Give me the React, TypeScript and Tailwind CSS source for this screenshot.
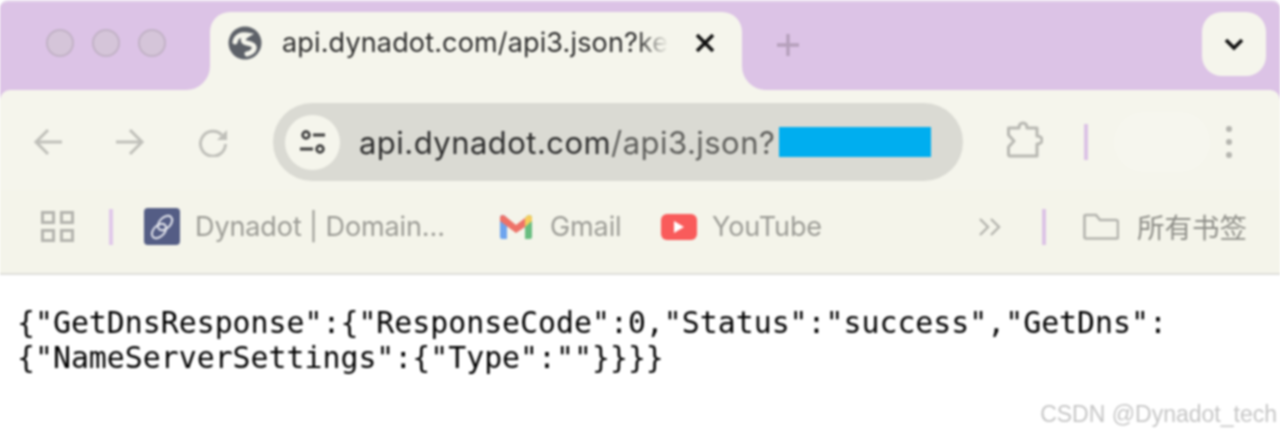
import React from "react";

function Globe() {
  return (
    <svg width="34" height="34" viewBox="0 0 34 34" className="shrink-0">
      <circle cx="17" cy="17" r="16.5" fill="#5d6168" />
      <path d="M7 16 C8 10 13 8 19 9 C14 12 14 16 19 17 C25 18 27 20 26 23 C25 26 23 27 19 28" stroke="#f5f5ec" strokeWidth="5" fill="none" strokeLinecap="round" />
    </svg>
  );
}

function Gmail() {
  return (
    <svg width="34" height="26" viewBox="0 0 34 26" className="shrink-0">
      <path d="M1 4 C1 1 4 0 6 2 L8 4 V25 H3 C2 25 1 24 1 23Z" fill="#6ea4ee" />
      <path d="M26 4 L28 2 C30 0 33 1 33 4 V23 C33 24 32 25 31 25 H26Z" fill="#68bd80" />
      <path d="M1 4 C1 1 4 0 6 2 L17 11 L26 4 V13 L17 19 L1 7Z" fill="#ee7268" />
      <path d="M26 4 L28 2 C30 0 33 1 33 4 V7 L26 13Z" fill="#f6cc5c" />
    </svg>
  );
}

function Bookmark({ icon, label, cls }: { icon: React.ReactNode; label: string; cls: string }) {
  return (
    <div className={"flex items-center " + cls}>
      {icon}
      <span className="text-[27px] leading-none text-[#9c9c96] whitespace-nowrap tracking-[-0.1px]">{label}</span>
    </div>
  );
}

export default function App() {
  return (
    <div className="h-[436px] w-[1280px] overflow-hidden bg-white blur-[0.8px] font-['Inter','Noto_Sans_CJK_SC',sans-serif] relative">
      <div className="rounded-t-[8px] overflow-hidden border-t-[2px] border-[#e8dbee] bg-[#dcc3e6]">
        {/* tab strip */}
        <div className="flex h-[88px] bg-[#f5f5ec]">
          <div className="w-[210px] bg-[#dcc3e6] rounded-br-[24px] flex items-center pb-[6px] pl-[46px] gap-[18px]">
            <div className="w-[28px] h-[28px] rounded-full bg-[#d5c5d9] border-2 border-[#c2b2c6]" />
            <div className="w-[28px] h-[28px] rounded-full bg-[#d5c5d9] border-2 border-[#c2b2c6]" />
            <div className="w-[28px] h-[28px] rounded-full bg-[#d5c5d9] border-2 border-[#c2b2c6]" />
          </div>
          <div className="w-[532px] bg-[#dcc3e6] pt-[10px]">
            <div className="h-full bg-[#f5f5ec] rounded-t-[20px] flex items-center pb-[16px] pl-[18px]">
              <Globe />
              <span className="ml-[20px] w-[386px] overflow-hidden whitespace-nowrap text-[27px] leading-[34px] tracking-[0.15px] text-[#2e2e2e] [mask-image:linear-gradient(to_right,black_92%,transparent)]">
                api.dynadot.com/api3.json?ke
              </span>
              <svg width="20" height="20" viewBox="0 0 20 20" className="ml-[27px] shrink-0">
                <path d="M2 2 L18 18 M18 2 L2 18" stroke="#111" strokeWidth="3.6" />
              </svg>
            </div>
          </div>
          <div className="flex-1 bg-[#dcc3e6] rounded-bl-[24px] flex items-start pt-[10px] pr-[14px]">
            <svg width="24" height="24" viewBox="0 0 24 24" className="ml-[34px] mt-[21px] shrink-0">
              <path d="M12 1 V23 M1 12 H23" stroke="#b5a0bb" strokeWidth="3.4" />
            </svg>
            <div className="ml-auto w-[64px] h-[64px] rounded-[20px] bg-[#f5f5ec] flex items-center justify-center">
              <svg width="20" height="14" viewBox="0 0 20 14">
                <path d="M2 3 L10 11 L18 3" stroke="#111" strokeWidth="3.6" fill="none" />
              </svg>
            </div>
          </div>
        </div>

        {/* toolbar */}
        <div className="h-[100px] bg-[#f5f5ec] rounded-t-[10px] flex items-start pt-[13px]">
          <svg width="30" height="28" viewBox="0 0 30 28" className="ml-[33px] mt-[25px] shrink-0">
            <path d="M29 14 H3 M15 2 L3 14 L15 26" stroke="#c0c0ba" strokeWidth="3" fill="none" />
          </svg>
          <svg width="30" height="28" viewBox="0 0 30 28" className="ml-[52px] mt-[25px] shrink-0">
            <path d="M1 14 H27 M15 2 L27 14 L15 26" stroke="#c0c0ba" strokeWidth="3" fill="none" />
          </svg>
          <svg width="30" height="30" viewBox="0 0 30 30" className="ml-[53px] mt-[24px] shrink-0">
            <path d="M24 8 A12.5 12.5 0 1 0 27.5 17" stroke="#c0c0ba" strokeWidth="3" fill="none" />
            <path d="M29 3 V13 H19Z" fill="#c0c0ba" />
          </svg>
          <div className="ml-[45px] w-[690px] h-[78px] rounded-[39px] bg-[#dadad3] flex items-center pl-[12px] shrink-0">
            <div className="w-[55px] h-[55px] rounded-full bg-[#f5f5ec] flex items-center justify-center shrink-0">
              <svg width="30" height="30" viewBox="0 0 30 30">
                <circle cx="8" cy="8" r="3.4" stroke="#3a3a3a" strokeWidth="2.6" fill="none" />
                <path d="M15 8 H27 M2 22 H15" stroke="#3a3a3a" strokeWidth="2.8" />
                <circle cx="22" cy="22" r="3.4" stroke="#3a3a3a" strokeWidth="2.6" fill="none" />
              </svg>
            </div>
            <span className="ml-[19px] text-[31px] leading-none tracking-[0.46px] whitespace-nowrap text-[#2e2e2e]">
              api.dynadot.com<span className="text-[#5f5f5c]">/api3.json?</span>
            </span>
            <div className="ml-[4px] w-[152px] h-[30px] bg-[#00aeef] shrink-0" />
          </div>
          <svg width="37" height="38" viewBox="0 0 37 38" className="ml-[43px] mt-[18px] shrink-0">
            <path d="M2.5 7 H13 C13 3 15 2 17 2 C19 2 21 3 21 7 H31 V15 C34 15 36 17 36 19 C36 21 34 23 31 23 V35 H4 Q2.5 35 2.5 33 V26 L8 20 L2.5 14 Z" stroke="#b8b8b2" strokeWidth="3" fill="none" strokeLinejoin="round" />
          </svg>
          <div className="ml-[41px] mt-[21px] w-[4px] h-[36px] bg-[#dcc3e6] shrink-0" />
          <div className="ml-[26px] mt-[9px] w-[96px] h-[60px] rounded-full bg-[#f6f6ee] shrink-0" />
          <div className="ml-[16px] mt-[23px] flex flex-col gap-[7px] shrink-0">
            <div className="w-[6px] h-[6px] rounded-full bg-[#b4b4ae]" />
            <div className="w-[6px] h-[6px] rounded-full bg-[#b4b4ae]" />
            <div className="w-[6px] h-[6px] rounded-full bg-[#b4b4ae]" />
          </div>
        </div>
      </div>

      {/* bookmarks */}
      <div className="h-[85px] bg-[#f4f4ea] border-b-[2px] border-[#dededa] flex items-center pb-[10px]">
        <div className="ml-[41px] grid grid-cols-2 gap-[5px] shrink-0">
          <div className="w-[14px] h-[13px] border-[3px] border-[#b4b4ae]" />
          <div className="w-[14px] h-[13px] border-[3px] border-[#b4b4ae]" />
          <div className="w-[14px] h-[13px] border-[3px] border-[#b4b4ae]" />
          <div className="w-[14px] h-[13px] border-[3px] border-[#b4b4ae]" />
        </div>
        <div className="ml-[35px] w-[4px] h-[36px] bg-[#e0c8ea] shrink-0" />
        <Bookmark
          cls="ml-[31px] gap-[15px] w-[355px]"
          label="Dynadot | Domain..."
          icon={
            <div className="w-[36px] h-[37px] rounded-[4px] bg-[#545d85] shrink-0">
              <svg width="36" height="37" viewBox="0 0 36 37" fill="none" stroke="#e4e6ee" strokeWidth="2">
                <ellipse cx="21" cy="15" rx="8.5" ry="5.5" transform="rotate(-45 21 15)" />
                <ellipse cx="15" cy="23" rx="8.5" ry="5.5" transform="rotate(-45 15 23)" />
              </svg>
            </div>
          }
        />
        <Bookmark cls="gap-[17px] w-[162px]" label="Gmail" icon={<Gmail />} />
        <Bookmark
          cls="gap-[15px] w-[317px]"
          label="YouTube"
          icon={
            <div className="w-[36px] h-[26px] rounded-[6px] bg-[#f95b5b] flex items-center justify-center shrink-0">
              <svg width="10" height="12" viewBox="0 0 10 12"><path d="M0 0 L10 6 L0 12Z" fill="#fff" /></svg>
            </div>
          }
        />
        <svg width="24" height="20" viewBox="0 0 24 20" className="shrink-0" fill="none" stroke="#b4b4ae" strokeWidth="2.4">
          <path d="M2 2 L10 10 L2 18 M13 2 L21 10 L13 18" />
        </svg>
        <div className="ml-[40px] w-[4px] h-[36px] bg-[#dcc3e6] shrink-0" />
        <svg width="36" height="27" viewBox="0 0 36 27" className="ml-[37px] shrink-0" fill="none" stroke="#b4b4ae" strokeWidth="2.6">
          <path d="M3 2 H13 L17 7 H33 C34 7 35 8 35 9 V24 C35 25 34 25.5 33 25.5 H3 C2 25.5 1.5 25 1.5 24 V3 C1.5 2.5 2 2 3 2Z" />
        </svg>
        <span className="ml-[18px] text-[27.5px] leading-none text-[#8e8e88] whitespace-nowrap font-['Noto_Sans_CJK_SC',sans-serif]">所有书签</span>
      </div>

      {/* json */}
      <pre className="mt-[30px] pl-[17px] font-['DejaVu_Sans_Mono',monospace] text-[29.85px] leading-[35px] text-black">
        {'{"GetDnsResponse":{"ResponseCode":0,"Status":"success","GetDns":\n{"NameServerSettings":{"Type":""}}}}'}
      </pre>

      <div className="absolute right-[3px] bottom-[10px] text-[23px] leading-none text-[#c6c6c6] font-['Liberation_Sans',sans-serif]">
        CSDN @Dynadot_tech
      </div>
    </div>
  );
}
